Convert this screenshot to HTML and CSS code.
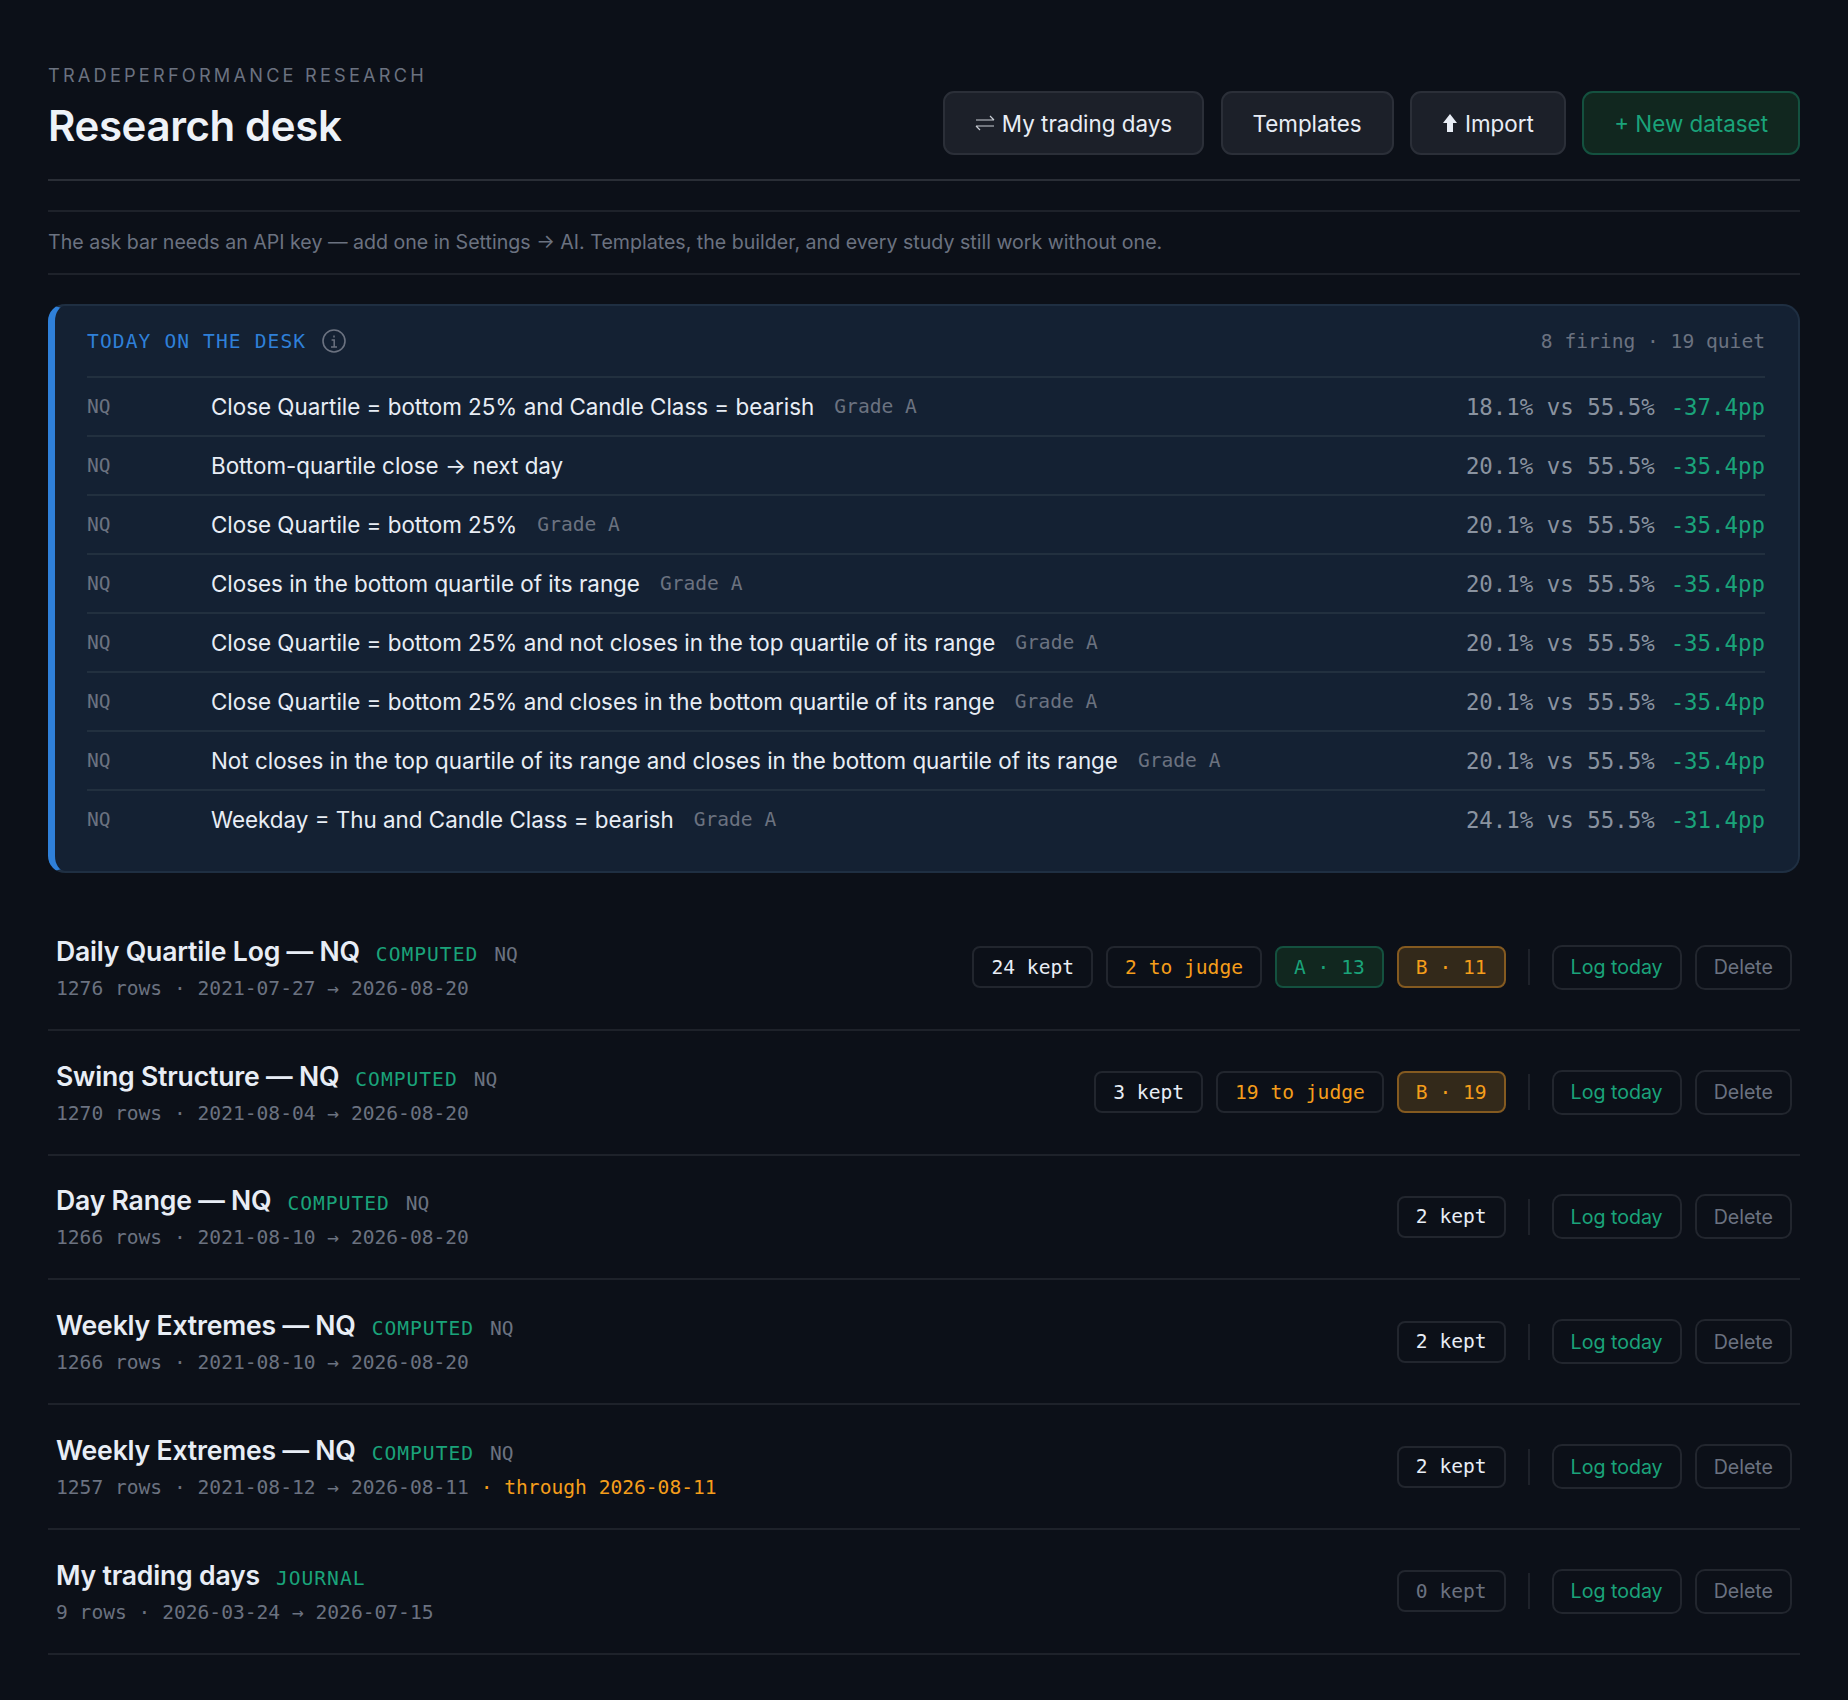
FILE: index.html
```html
<!DOCTYPE html>
<html lang="en">
<head>
<meta charset="utf-8">
<title>Research desk</title>
<link rel="stylesheet" href="styles.css">
</head>
<body>
<main class="page">
  <header class="head">
    <div class="head-text">
      <div class="eyebrow">TRADEPERFORMANCE RESEARCH</div>
      <h1 class="title">Research desk</h1>
    </div>
    <div class="actions">
      <button class="btn"><svg class="swap" viewBox="0 0 20 16" width="20" height="16"><path d="M1 5h18M15 1l4 4M19 11H1M5 15l-4-4" fill="none" stroke="currentColor" stroke-width="1.2"/></svg>My trading days</button>
      <button class="btn">Templates</button>
      <button class="btn"><svg class="up" viewBox="0 0 16 20" width="16" height="20"><path d="M8 1l7 9h-4v9H5v-9H1z" fill="currentColor"/></svg>Import</button>
      <button class="btn btn-green">+ New dataset</button>
    </div>
  </header>
  <p class="notice">The ask bar needs an API key — add one in Settings → AI. Templates, the builder, and every study still work without one.</p>

  <section class="desk">
    <div class="desk-head">
      <div class="desk-title">TODAY ON THE DESK<svg class="info" viewBox="0 0 24 24" width="24" height="24"><circle cx="12" cy="12" r="11" fill="none" stroke="currentColor" stroke-width="1.6"/><path d="M12 6.4v2M9.6 11h2.6v7M9 18h6" fill="none" stroke="currentColor" stroke-width="1.5"/></svg></div>
      <div class="desk-count">8 firing · 19 quiet</div>
    </div>
    <div class="sig"><span class="sym">NQ</span><span class="rule">Close Quartile = bottom 25% and Candle Class = bearish</span><span class="grade">Grade A</span><span class="nums">18.1% vs 55.5%</span><span class="pp">-37.4pp</span></div>
    <div class="sig"><span class="sym">NQ</span><span class="rule">Bottom-quartile close → next day</span><span class="nums">20.1% vs 55.5%</span><span class="pp">-35.4pp</span></div>
    <div class="sig"><span class="sym">NQ</span><span class="rule">Close Quartile = bottom 25%</span><span class="grade">Grade A</span><span class="nums">20.1% vs 55.5%</span><span class="pp">-35.4pp</span></div>
    <div class="sig"><span class="sym">NQ</span><span class="rule">Closes in the bottom quartile of its range</span><span class="grade">Grade A</span><span class="nums">20.1% vs 55.5%</span><span class="pp">-35.4pp</span></div>
    <div class="sig"><span class="sym">NQ</span><span class="rule">Close Quartile = bottom 25% and not closes in the top quartile of its range</span><span class="grade">Grade A</span><span class="nums">20.1% vs 55.5%</span><span class="pp">-35.4pp</span></div>
    <div class="sig"><span class="sym">NQ</span><span class="rule">Close Quartile = bottom 25% and closes in the bottom quartile of its range</span><span class="grade">Grade A</span><span class="nums">20.1% vs 55.5%</span><span class="pp">-35.4pp</span></div>
    <div class="sig"><span class="sym">NQ</span><span class="rule">Not closes in the top quartile of its range and closes in the bottom quartile of its range</span><span class="grade">Grade A</span><span class="nums">20.1% vs 55.5%</span><span class="pp">-35.4pp</span></div>
    <div class="sig"><span class="sym">NQ</span><span class="rule">Weekday = Thu and Candle Class = bearish</span><span class="grade">Grade A</span><span class="nums">24.1% vs 55.5%</span><span class="pp">-31.4pp</span></div>
  </section>

  <section class="list">
    <article class="ds">
      <div class="ds-main">
        <div class="ds-name"><strong>Daily Quartile Log — NQ</strong><span class="kind">COMPUTED</span><span class="tick">NQ</span></div>
        <div class="ds-meta">1276 rows · 2021-07-27 → 2026-08-20</div>
      </div>
      <div class="ds-side">
        <span class="chip">24 kept</span><span class="chip chip-amber">2 to judge</span><span class="chip chip-a">A · 13</span><span class="chip chip-b">B · 11</span>
        <span class="sep"></span>
        <button class="sm sm-green">Log today</button><button class="sm">Delete</button>
      </div>
    </article>
    <article class="ds">
      <div class="ds-main">
        <div class="ds-name"><strong>Swing Structure — NQ</strong><span class="kind">COMPUTED</span><span class="tick">NQ</span></div>
        <div class="ds-meta">1270 rows · 2021-08-04 → 2026-08-20</div>
      </div>
      <div class="ds-side">
        <span class="chip">3 kept</span><span class="chip chip-amber">19 to judge</span><span class="chip chip-b">B · 19</span>
        <span class="sep"></span>
        <button class="sm sm-green">Log today</button><button class="sm">Delete</button>
      </div>
    </article>
    <article class="ds">
      <div class="ds-main">
        <div class="ds-name"><strong>Day Range — NQ</strong><span class="kind">COMPUTED</span><span class="tick">NQ</span></div>
        <div class="ds-meta">1266 rows · 2021-08-10 → 2026-08-20</div>
      </div>
      <div class="ds-side">
        <span class="chip">2 kept</span>
        <span class="sep"></span>
        <button class="sm sm-green">Log today</button><button class="sm">Delete</button>
      </div>
    </article>
    <article class="ds">
      <div class="ds-main">
        <div class="ds-name"><strong>Weekly Extremes — NQ</strong><span class="kind">COMPUTED</span><span class="tick">NQ</span></div>
        <div class="ds-meta">1266 rows · 2021-08-10 → 2026-08-20</div>
      </div>
      <div class="ds-side">
        <span class="chip">2 kept</span>
        <span class="sep"></span>
        <button class="sm sm-green">Log today</button><button class="sm">Delete</button>
      </div>
    </article>
    <article class="ds">
      <div class="ds-main">
        <div class="ds-name"><strong>Weekly Extremes — NQ</strong><span class="kind">COMPUTED</span><span class="tick">NQ</span></div>
        <div class="ds-meta">1257 rows · 2021-08-12 → 2026-08-11 <span class="stale">· through 2026-08-11</span></div>
      </div>
      <div class="ds-side">
        <span class="chip">2 kept</span>
        <span class="sep"></span>
        <button class="sm sm-green">Log today</button><button class="sm">Delete</button>
      </div>
    </article>
    <article class="ds">
      <div class="ds-main">
        <div class="ds-name"><strong>My trading days</strong><span class="kind">JOURNAL</span></div>
        <div class="ds-meta">9 rows · 2026-03-24 → 2026-07-15</div>
      </div>
      <div class="ds-side">
        <span class="chip chip-dim">0 kept</span>
        <span class="sep"></span>
        <button class="sm sm-green">Log today</button><button class="sm">Delete</button>
      </div>
    </article>
  </section>
</main>
</body>
</html>
```

FILE: styles.css
```css
* { box-sizing: border-box; }
html, body { margin: 0; padding: 0; }
body {
  background: #0c1018;
  color: #e8edf5;
  font-family: Inter, "Noto Sans", sans-serif;
  min-height: 1700px;
}
.page { padding: 58px 48px 0; }

.head {
  display: flex;
  align-items: flex-end;
  justify-content: space-between;
  height: 123px;
  padding-bottom: 25px;
  border-bottom: 2px solid #2a2e36;
}
.eyebrow {
  font-size: 18.2px;
  letter-spacing: 3.2px;
  line-height: 26px;
  color: #6b7280;
}
.title {
  margin: 10px 0 0;
  font-size: 42px;
  font-weight: 600;
  line-height: 56px;
  letter-spacing: -0.4px;
  color: #eef2f8;
}
.actions { display: flex; gap: 16.4px; margin-bottom: -1px; }
.btn {
  display: flex;
  align-items: center;
  height: 64px;
  padding: 0 30px;
  border: 2px solid #2b2f38;
  border-radius: 11px;
  background: #1c2029;
  color: #e8edf5;
  font: 400 22.4px Inter, sans-serif;
}
.btn-green { background: #11271f; border-color: #14513f; color: #1aa37a; }
.swap { margin-right: 7px; color: #c7ccd4; }
.up { margin-right: 7px; }

.notice {
  margin: 29px 0 0;
  height: 65px;
  border-top: 2px solid #1e222a;
  border-bottom: 2px solid #1e222a;
  font-size: 19.6px;
  line-height: 61px;
  color: #6b7280;
}

.desk {
  margin-top: 29px;
  height: 569px;
  padding: 0 33px 0 32px;
  background: #142133;
  border: 2px solid #1f2f42;
  border-left: 7px solid #2f80d9;
  border-radius: 17px;
}
.desk-head {
  display: flex;
  align-items: center;
  justify-content: space-between;
  height: 70px;
}
.desk-title {
  display: flex;
  align-items: center;
  font: 500 19.6px "DejaVu Sans Mono", monospace;
  letter-spacing: 1.1px;
  color: #2f80d9;
}
.info { margin-left: 16px; color: #6b7280; }
.desk-count { font: 400 19.6px "DejaVu Sans Mono", monospace; color: #6b7280; }

.sig {
  display: flex;
  align-items: center;
  height: 59px;
  border-top: 2px solid #22303f;
}
.sym { width: 124px; font: 400 19.6px "DejaVu Sans Mono", monospace; color: #6b7280; }
.rule { font-size: 22.4px; color: #e8edf5; }
.grade { margin-left: 20px; font: 400 19.6px "DejaVu Sans Mono", monospace; color: #6b7280; }
.nums { margin-left: auto; font: 400 22.4px "DejaVu Sans Mono", monospace; color: #8a93a0; }
.pp { margin-left: 16px; font: 500 22.4px "DejaVu Sans Mono", monospace; color: #1aa37a; }

.list { margin-top: 33px; }
.ds {
  display: flex;
  align-items: center;
  justify-content: space-between;
  height: 124.8px;
  padding: 0 8px;
  border-bottom: 2px solid #1e222a;
}
.ds-name { display: flex; align-items: baseline; }
.ds-name strong { font-size: 26.6px; font-weight: 600; letter-spacing: -0.2px; color: #e8edf5; }
.kind { margin-left: 16px; font: 400 19.6px "DejaVu Sans Mono", monospace; letter-spacing: 1px; color: #1aa37a; }
.tick { margin-left: 16px; font: 400 19.6px "DejaVu Sans Mono", monospace; color: #6b7280; }
.ds-meta { margin-top: 10px; font: 400 19.6px "DejaVu Sans Mono", monospace; color: #6b7280; }
.stale { color: #f59e1b; }

.ds-side { display: flex; align-items: center; gap: 13px; }
.chip {
  display: flex;
  align-items: center;
  height: 42px;
  padding: 0 17px;
  border: 2px solid #22262e;
  border-radius: 8px;
  font: 400 19.6px "DejaVu Sans Mono", monospace;
  color: #e8edf5;
}
.chip-amber { color: #f59e1b; }
.chip-a { background: #11271f; border-color: #14513f; color: #1aa37a; }
.chip-b { background: #33291a; border-color: #845a20; color: #f59e1b; }
.chip-dim { color: #6b7280; }
.sep { width: 2px; height: 36px; margin: 0 9px; background: #1e222a; }
.sm {
  height: 45px;
  padding: 0 17px;
  border: 2px solid #22262e;
  border-radius: 10px;
  background: transparent;
  color: #6b7280;
  font: 400 19.6px Inter, sans-serif;
}
.sm-green { color: #1aa37a; }
```
